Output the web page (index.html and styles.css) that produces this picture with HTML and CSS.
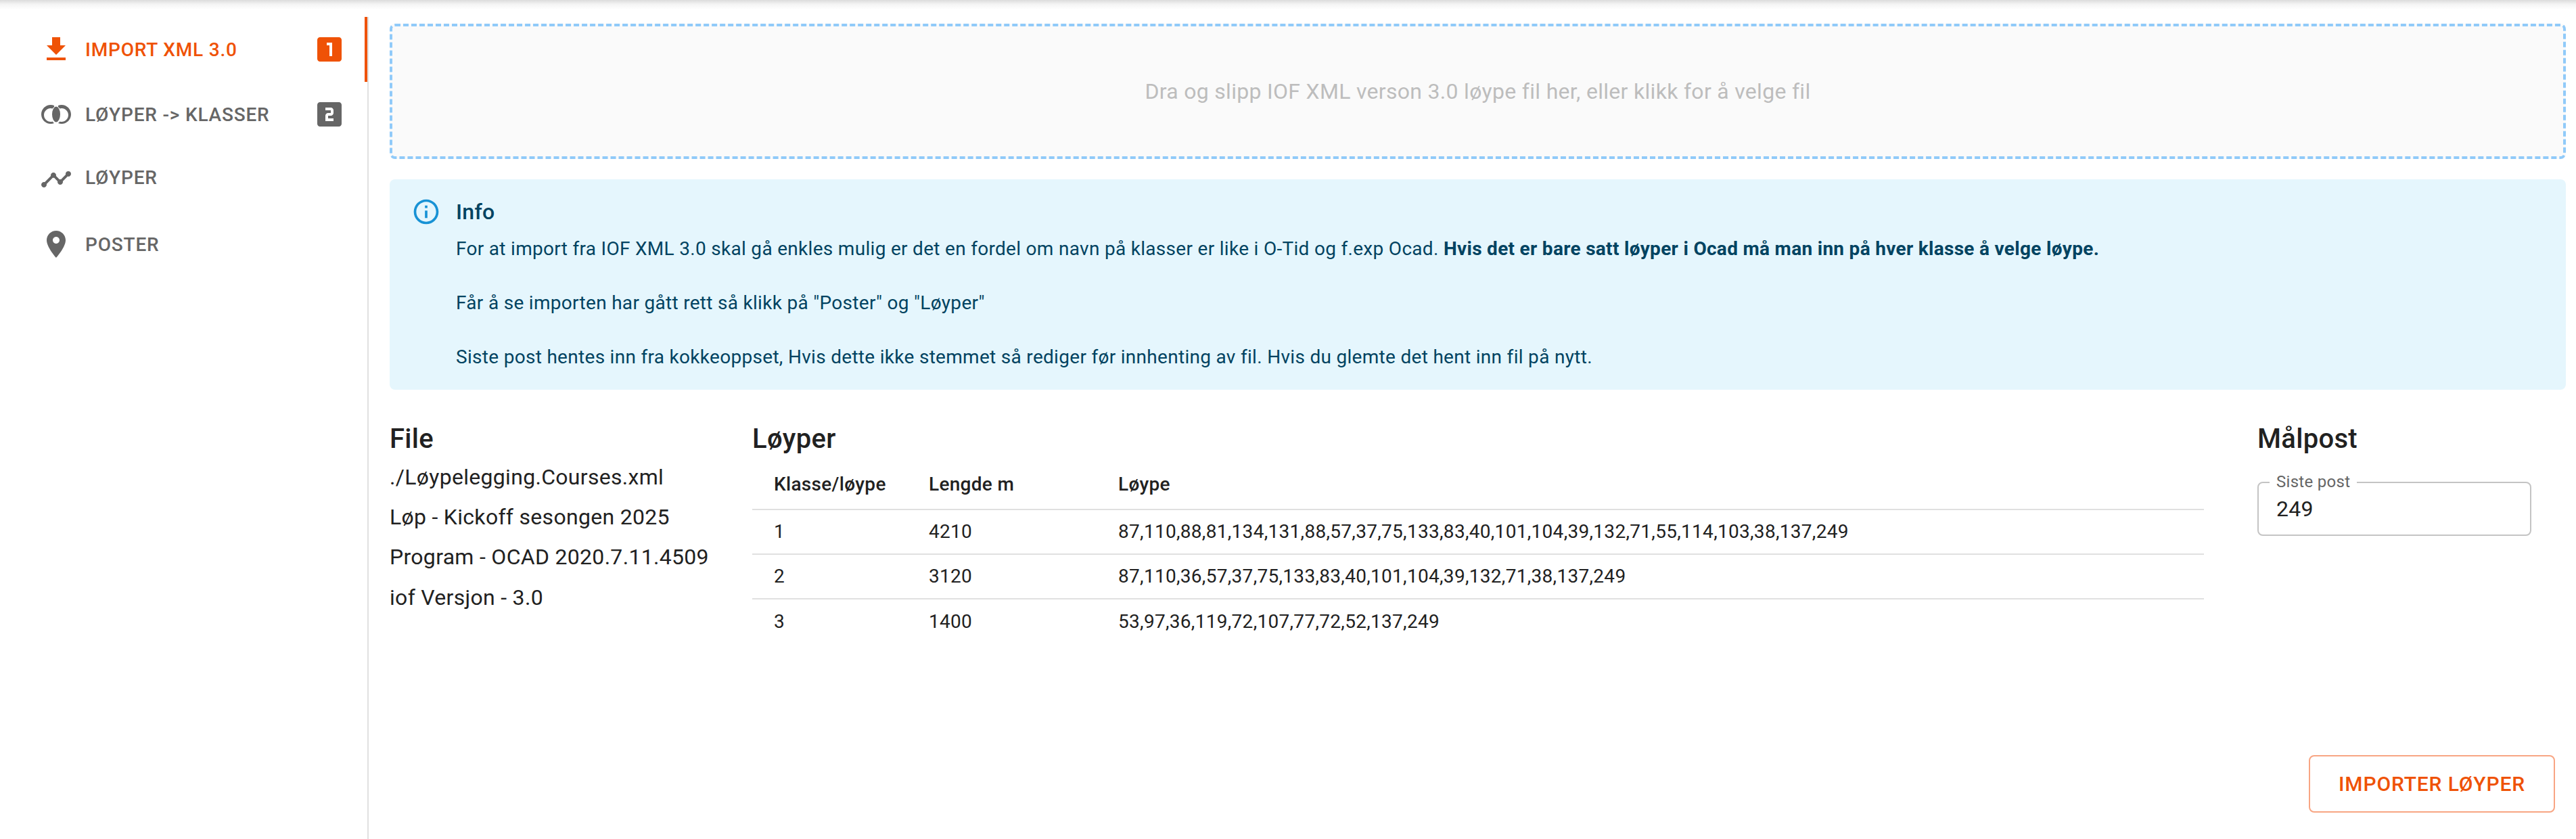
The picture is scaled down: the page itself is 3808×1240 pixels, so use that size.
FILE: index.html
```html
<!DOCTYPE html>
<html lang="no">
<head>
<meta charset="utf-8">
<title>Import XML 3.0</title>
<link rel="stylesheet" href="styles.css">
</head>
<body>
<div class="appbar-shadow"></div>
<div class="layout">
  <nav class="tabs">
    <a class="tab tab-active">
      <svg class="tab-icon" viewBox="0 0 24 24"><path d="M19 9h-4V3H9v6H5l7 7 7-7zM5 18v2h14v-2H5z"/></svg>
      <span class="tab-label">IMPORT XML 3.0</span>
      <svg class="tab-icon" viewBox="0 0 24 24"><path d="M19 3H5c-1.1 0-2 .9-2 2v14c0 1.1.9 2 2 2h14c1.1 0 2-.9 2-2V5c0-1.1-.9-2-2-2zm-5 14h-2V9h-2V7h4v10z"/></svg>
    </a>
    <a class="tab">
      <svg class="tab-icon" viewBox="0 0 24 24"><ellipse cx="12" cy="12" rx="3" ry="5.74"/><path d="M10.53 5.5C9.75 5.19 8.9 5 8 5c-3.86 0-7 3.14-7 7s3.14 7 7 7c.9 0 1.75-.19 2.53-.5-.48-.4-.9-.82-1.27-1.26-.4.17-.83.26-1.26.26-2.76 0-5-2.24-5-5s2.24-5 5-5c.43 0 .86.09 1.26.26.37-.44.79-.86 1.27-1.26zM13.47 5.5C14.25 5.19 15.1 5 16 5c3.86 0 7 3.14 7 7s-3.14 7-7 7c-.9 0-1.75-.19-2.53-.5.48-.4.9-.82 1.27-1.26.4.17.83.26 1.26.26 2.76 0 5-2.24 5-5s-2.24-5-5-5c-.43 0-.86.09-1.26.26-.37-.44-.79-.86-1.27-1.26z"/></svg>
      <span class="tab-label">LØYPER -&gt; KLASSER</span>
      <svg class="tab-icon" viewBox="0 0 24 24"><path d="M19 3H5c-1.1 0-2 .9-2 2v14c0 1.1.9 2 2 2h14c1.1 0 2-.9 2-2V5c0-1.1-.9-2-2-2zm-4 8c0 1.11-.9 2-2 2h-2v2h4v2H9v-4c0-1.11.9-2 2-2h2V9H9V7h4c1.1 0 2 .89 2 2v2z"/></svg>
    </a>
    <a class="tab">
      <svg class="tab-icon" viewBox="0 0 24 24"><path d="M23 8c0 1.1-.9 2-2 2-.18 0-.35-.02-.51-.07l-3.56 3.55c.05.16.07.34.07.52 0 1.1-.9 2-2 2s-2-.9-2-2c0-.18.02-.36.07-.52l-2.55-2.55c-.16.05-.34.07-.52.07s-.36-.02-.52-.07l-4.55 4.56c.05.16.07.33.07.51 0 1.1-.9 2-2 2s-2-.9-2-2 .9-2 2-2c.18 0 .35.02.51.07l4.56-4.55C8.02 9.36 8 9.18 8 9c0-1.1.9-2 2-2s2 .9 2 2c0 .18-.02.36-.07.52l2.55 2.55c.16-.05.34-.07.52-.07s.36.02.52.07l3.55-3.56C19.02 8.35 19 8.18 19 8c0-1.1.9-2 2-2s2 .9 2 2z"/></svg>
      <span class="tab-label tab-label-raised">LØYPER</span>
    </a>
    <a class="tab">
      <svg class="tab-icon" viewBox="0 0 24 24"><path d="M12 2C8.13 2 5 5.13 5 9c0 5.25 7 13 7 13s7-7.75 7-13c0-3.87-3.13-7-7-7zm0 9.5c-1.38 0-2.5-1.12-2.5-2.5s1.12-2.5 2.5-2.5 2.5 1.12 2.5 2.5-1.12 2.5-2.5 2.5z"/></svg>
      <span class="tab-label">POSTER</span>
    </a>
  </nav>
  <main class="content">
    <div class="dropzone">Dra og slipp IOF XML verson 3.0 løype fil her, eller klikk for å velge fil</div>
    <section class="alert">
      <svg class="alert-icon" viewBox="0 0 24 24"><path d="M11 7h2v2h-2zm0 4h2v6h-2zm1-9C6.48 2 2 6.48 2 12s4.48 10 10 10 10-4.48 10-10S17.52 2 12 2zm0 18c-4.41 0-8-3.59-8-8s3.59-8 8-8 8 3.59 8 8-3.59 8-8 8z"/></svg>
      <div class="alert-message">
        <div class="alert-title">Info</div>
        <p class="alert-line">For at import fra IOF XML 3.0 skal gå enkles mulig er det en fordel om navn på klasser er like i O-Tid og f.exp Ocad. <strong>Hvis det er bare satt løyper i Ocad må man inn på hver klasse å velge løype.</strong></p>
        <p class="alert-line">Får å se importen har gått rett så klikk på "Poster" og "Løyper"</p>
        <p class="alert-line">Siste post hentes inn fra kokkeoppset, Hvis dette ikke stemmet så rediger før innhenting av fil. Hvis du glemte det hent inn fil på nytt.</p>
      </div>
    </section>
    <div class="columns">
      <section class="col-file">
        <h2 class="heading">File</h2>
        <p class="file-line">./Løypelegging.Courses.xml</p>
        <p class="file-line">Løp - Kickoff sesongen 2025</p>
        <p class="file-line">Program - OCAD 2020.7.11.4509</p>
        <p class="file-line">iof Versjon - 3.0</p>
      </section>
      <section class="col-table">
        <h2 class="heading">Løyper</h2>
        <table class="courses">
          <thead>
            <tr><th class="c1">Klasse/løype</th><th class="c2">Lengde m</th><th>Løype</th></tr>
          </thead>
          <tbody>
            <tr><td>1</td><td>4210</td><td>87,110,88,81,134,131,88,57,37,75,133,83,40,101,104,39,132,71,55,114,103,38,137,249</td></tr>
            <tr><td>2</td><td>3120</td><td>87,110,36,57,37,75,133,83,40,101,104,39,132,71,38,137,249</td></tr>
            <tr><td>3</td><td>1400</td><td>53,97,36,119,72,107,77,72,52,137,249</td></tr>
          </tbody>
        </table>
      </section>
      <section class="col-goal">
        <h2 class="heading">Målpost</h2>
        <div class="field">
          <span class="field-label">Siste post</span>
          <span class="field-value">249</span>
        </div>
      </section>
    </div>
    <div class="actions"><button class="btn" type="button">IMPORTER LØYPER</button></div>
  </main>
</div>
</body>
</html>
```
FILE: styles.css
```css
* { box-sizing: border-box; }
html, body { margin: 0; height: 100%; }
body {
  width: 3808px;
  height: 1240px;
  overflow: hidden;
  background: #fff;
  font-family: Roboto, "Liberation Sans", sans-serif;
  color: #212121;
  display: flex;
  flex-direction: column;
}
.appbar-shadow {
  height: 14px;
  margin-bottom: -14px;
  background: linear-gradient(#dcdcdc, #f4f4f4 45%, #fff);
  position: relative;
}
.layout { flex: 1; display: flex; padding-top: 25px; min-height: 0; }

.tabs {
  width: 545px;
  flex: none;
  border-right: 2px solid #e0e0e0;
  display: flex;
  flex-direction: column;
}
.tab {
  height: 96px;
  display: flex;
  align-items: center;
  padding: 0 32px 0 59px;
  color: #666;
  fill: #666;
  font-size: 28px;
  font-weight: 500;
  letter-spacing: 0.8px;
}
.tab-active {
  color: #ef5206;
  fill: #ef5206;
  box-shadow: inset -4px 0 0 #ef5206;
}
.tab-icon { width: 48px; height: 48px; flex: none; }
.tab-label { flex: 1; margin-left: 19px; white-space: nowrap; }
.tab-label-raised { margin-bottom: 5px; }

.content {
  flex: 1;
  min-width: 0;
  display: flex;
  flex-direction: column;
  padding: 10px 15px 39px 31px;
}
.dropzone {
  height: 200px;
  flex: none;
  border: 4px dashed #90caf9;
  border-radius: 8px;
  background: #fafafa;
  color: #bdbdbd;
  font-size: 32px;
  letter-spacing: 0.3px;
  display: flex;
  align-items: center;
  justify-content: center;
}
.alert {
  margin-top: 30px;
  flex: none;
  display: flex;
  gap: 22px;
  padding: 12px 32px;
  border-radius: 8px;
  background: #e5f6fd;
  color: #014361;
  fill: #0288d1;
}
.alert-icon { width: 44px; height: 44px; flex: none; margin-top: 14px; opacity: 0.9; }
.alert-message { padding: 16px 0; min-width: 0; font-size: 28px; line-height: 40px; letter-spacing: 0.3px; }
.alert-title {
  font-size: 32px;
  font-weight: 500;
  line-height: 48px;
  margin: -4px 0 11px;
}
.alert-line { margin: 0 0 40px; }
.alert-line:last-child { margin-bottom: 0; }
.alert-line strong { font-weight: 700; }

.columns { display: flex; margin-top: 41px; flex: none; }
.heading {
  margin: 0;
  font-size: 40px;
  font-weight: 500;
  line-height: 64px;
  letter-spacing: 0.3px;
}
.col-file { width: 536px; flex: none; }
.file-line { margin: 0 0 11.2px; font-size: 32px; line-height: 48px; letter-spacing: 0.3px; }
.col-table { width: 2146px; flex: none; }
.courses {
  width: 100%;
  margin-top: 6px;
  border-collapse: collapse;
  table-layout: fixed;
  font-size: 28px;
  line-height: 40px;
  letter-spacing: 0.3px;
}
.courses th, .courses td {
  padding: 12px 32px;
  height: 66px;
  text-align: left;
  border-bottom: 2px solid #e0e0e0;
}
.courses th { font-weight: 500; padding: 8px 32px 16px; }
.courses td { font-weight: 400; }
.courses tbody tr:last-child td { border-bottom: 0; }
.c1 { width: 229px; }
.c2 { width: 280px; }

.col-goal { margin-left: 79px; width: 405px; flex: none; }
.field {
  position: relative;
  margin-top: 31px;
  height: 80px;
  border: 2px solid #c4c4c4;
  border-radius: 8px;
  padding: 0 26px;
  display: flex;
  align-items: center;
}
.field-label {
  position: absolute;
  left: 16px;
  top: -16px;
  padding: 0 10px;
  background: #fff;
  color: #666;
  font-size: 24px;
  line-height: 28px;
  letter-spacing: 0.3px;
}
.field-value { font-size: 32px; line-height: 48px; letter-spacing: 0.3px; }

.actions { margin-top: auto; padding-right: 16px; display: flex; justify-content: flex-end; }
.btn {
  width: 364px;
  height: 85px;
  padding: 0;
  border: 2px solid #f8a583;
  border-radius: 8px;
  background: #fff;
  color: #ef5206;
  font-family: inherit;
  font-size: 30px;
  font-weight: 500;
  letter-spacing: 0.86px;
}
```
